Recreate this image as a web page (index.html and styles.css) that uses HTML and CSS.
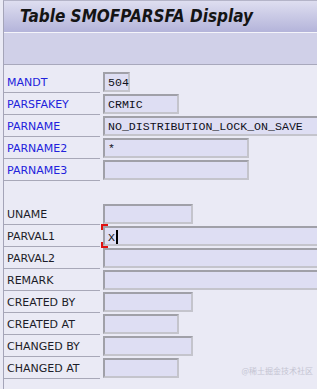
FILE: index.html
```html
<!DOCTYPE html>
<html lang="en">
<head>
    <meta charset="UTF-8">
    <title>Table SMOFPARSFA Display</title>
    <link rel="stylesheet" href="styles.css">
</head>
<body>
    <div class="window">
        <div class="titlebar">
            <h1>Table SMOFPARSFA Display</h1>
        </div>
        <div class="toolbar"></div>

        <div class="content">
            <!-- key fields -->
            <div class="row key"><span class="label">MANDT</span><span class="field w-mandt">504</span></div>
            <div class="row key"><span class="label">PARSFAKEY</span><span class="field w-key">CRMIC</span></div>
            <div class="row key"><span class="label">PARNAME</span><span class="field w-full">NO_DISTRIBUTION_LOCK_ON_SAVE</span></div>
            <div class="row key"><span class="label">PARNAME2</span><span class="field w-name">*</span></div>
            <div class="row key"><span class="label">PARNAME3</span><span class="field w-name"></span></div>

            <div class="row blank"></div>

            <!-- data fields -->
            <div class="row"><span class="label">UNAME</span><span class="field w-user"></span></div>
            <div class="row"><span class="label">PARVAL1</span><span class="field w-full focused">X<i class="cursor"></i></span></div>
            <div class="row"><span class="label">PARVAL2</span><span class="field w-full"></span></div>
            <div class="row"><span class="label">REMARK</span><span class="field w-full"></span></div>
            <div class="row"><span class="label">CREATED BY</span><span class="field w-user"></span></div>
            <div class="row"><span class="label">CREATED AT</span><span class="field w-key"></span></div>
            <div class="row"><span class="label">CHANGED BY</span><span class="field w-user"></span></div>
            <div class="row"><span class="label">CHANGED AT</span><span class="field w-key"></span></div>

            <div class="watermark">@稀土掘金技术社区</div>
        </div>
    </div>
</body>
</html>
```

FILE: styles.css
```css
body {
    margin: 0;
    background-color: #eaeaf5;
    font-family: 'DejaVu Sans', sans-serif;
    overflow: hidden;
}

.window {
    margin-left: 3px;
    border-left: 1px solid #a4a4b8;
    border-top: 1px solid #b4b4c8;
    min-height: 388px;
    overflow: hidden;
}

.titlebar {
    height: 31px;
    background: linear-gradient(#dedef0, #b4b4da);
    border-bottom: 1px solid #f4f4fa;
}

h1 {
    margin: 0;
    padding: 4px 0 0 16px;
    font-size: 17px;
    font-weight: bold;
    font-style: italic;
    font-stretch: condensed;
    color: #141414;
    line-height: 22px;
}

.toolbar {
    height: 31px;
    background-color: #d0d0e8;
    border-bottom: 1px solid #a8a8bc;
}

.content {
    position: relative;
    padding-top: 6px;
}

.row {
    display: flex;
    align-items: flex-start;
    height: 22px;
}

.label {
    flex-shrink: 0;
    box-sizing: border-box;
    width: 96px;
    height: 22px;
    padding: 5px 0 0 3px;
    font-size: 11px;
    color: #1c1c28;
    border-bottom: 1px solid #a8a8b8;
}

.key .label {
    color: #2222dc;
}

.blank .label {
    border-bottom: none;
}

.field {
    flex-shrink: 0;
    position: relative;
    box-sizing: border-box;
    margin: 1px 0 0 3px;
    height: 20px;
    padding: 2px 0 0 3px;
    background-color: #dedef3;
    border: 2px solid #a0a0a8;
    border-right-color: #c4c4cc;
    border-bottom-color: #c4c4cc;
    font-family: 'Liberation Mono', monospace;
    font-size: 11.6px;
    line-height: 13px;
    color: #101020;
    white-space: nowrap;
}

.w-mandt { width: 27px; }
.w-key { width: 76px; }
.w-user { width: 90px; }
.w-name { width: 146px; }
.w-full { width: 230px; }

.focused::before,
.focused::after {
    content: "";
    position: absolute;
    left: -4px;
    width: 5px;
    height: 4px;
    border-left: 2px solid #e01010;
}

.focused::before {
    top: -4px;
    border-top: 2px solid #e01010;
}

.focused::after {
    bottom: -4px;
    border-bottom: 2px solid #e01010;
}

.cursor {
    display: inline-block;
    width: 2px;
    height: 14px;
    margin-left: 1px;
    vertical-align: -3px;
    background-color: #000;
}

.watermark {
    position: absolute;
    right: 4px;
    bottom: 3px;
    font-family: 'Noto Sans CJK SC', sans-serif;
    font-size: 8px;
    color: #c4c4d2;
}
```
